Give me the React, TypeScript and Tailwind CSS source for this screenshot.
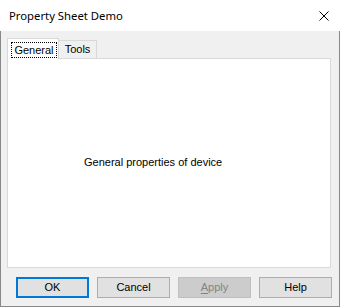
import React from "react";

const dlgFont = { fontFamily: '"Liberation Sans", Arial, sans-serif' };
const titleFont = { fontFamily: '"Segoe UI", "Noto Sans", sans-serif' };

function Btn({ children, variant }: { children: React.ReactNode; variant?: "default" | "disabled" }) {
  const cls =
    variant === "default"
      ? "border-2 border-[#0078d7] bg-[#e1e1e1] text-black"
      : variant === "disabled"
      ? "border border-[#bfbfbf] bg-[#cccccc] text-[#838383]"
      : "border border-[#adadad] bg-[#e1e1e1] text-black";
  return (
    <div className={`w-[73px] h-[21px] flex items-center justify-center text-[11px] leading-none ${cls}`}>
      {children}
    </div>
  );
}

export default function App() {
  return (
    <div className="w-[340px] h-[307px] flex flex-col overflow-hidden" style={dlgFont}>
      <div className="h-[31px] bg-white flex items-center justify-between pl-[9px] pr-[11px] shrink-0">
        <span className="text-[11.3px] text-black leading-none" style={titleFont}>Property Sheet Demo</span>
        <svg width="10" height="10" viewBox="0 0 10 10" className="block">
          <path d="M0.5 0.5 L9.5 9.5 M9.5 0.5 L0.5 9.5" stroke="#000" strokeWidth="1" fill="none" />
        </svg>
      </div>
      <div className="flex-1 flex flex-col bg-[#f0f0f0] border-l border-r border-b border-[#888888] pt-[7px]">
        <div className="ml-[6px] h-[20px] flex items-end relative z-10">
          <div className="w-[52px] h-[21px] -mb-px bg-white border border-b-0 border-[#d9d9d9] pl-[3px] pt-[3px]">
            <div className="w-[46px] h-[16px] border border-dotted border-black flex items-center justify-center text-[11px] leading-none text-black">
              General
            </div>
          </div>
          <div className="w-[38px] h-[18px] border border-l-0 border-b-0 border-[#d9d9d9] flex items-center justify-center text-[11px] leading-none text-black">
            Tools
          </div>
        </div>
        <div className="ml-[6px] w-[324px] h-[210px] bg-white border border-[#d9d9d9] flex items-center pl-[76px] pb-[1px]">
          <span className="text-[11px] leading-none text-black">General properties of device</span>
        </div>
        <div className="mt-[9px] ml-[15px] flex gap-[8px]">
          <Btn variant="default">OK</Btn>
          <Btn>Cancel</Btn>
          <Btn variant="disabled">
            <span>
              <span className="underline underline-offset-2">A</span>pply
            </span>
          </Btn>
          <Btn>Help</Btn>
        </div>
      </div>
    </div>
  );
}
